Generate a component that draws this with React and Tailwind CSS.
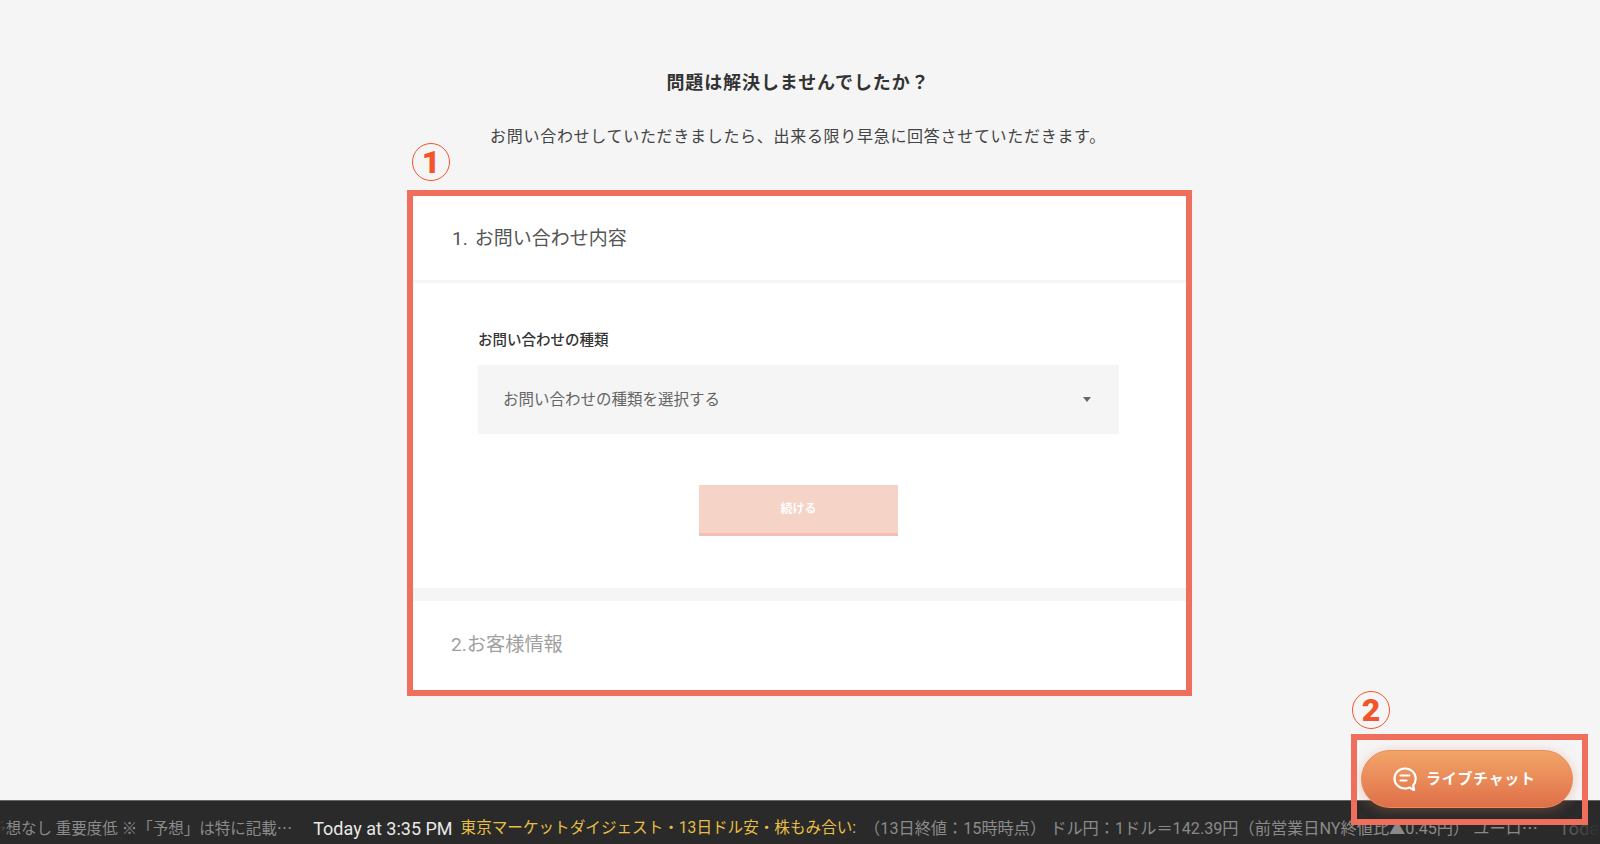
// Contact form page with annotation boxes and ticker
import React from 'react'

const font = { fontFamily: 'Roboto, "Noto Sans CJK JP", sans-serif' }

function ChatIcon() {
  return (
    <svg width="24" height="24" viewBox="0 0 24 24" fill="none" stroke="white" strokeWidth="2.2" strokeLinecap="round" strokeLinejoin="round">
      <path d="M12 1.5C6 1.5 1.5 6 1.5 11.5S6 21.5 12 21.5c1.6 0 3.2-.3 4.5-1l4.5 2.5-.8-4.8c1.7-1.8 2.5-4 2.5-6.7C22.700 6 18 1.500 12 1.500Z" />
      <path d="M7.500 8.500h9M7.500 13.500h6" />
    </svg>
  )
}

function Marker({ n, className }) {
  return (
    <div className={`absolute w-[38px] h-[38px] rounded-full border-[1.500px] border-[#f2552c] flex items-center justify-center text-[32px] leading-none font-black text-[#f2552c] ${className}`}>
      {n}
    </div>
  )
}

export default function App() {
  return (
    <div className="relative h-screen flex flex-col overflow-hidden bg-[#f5f5f5]" style={font}>
      <main className="flex-1 min-h-0 flex flex-col items-center pr-[4px]">
        <h1 className="mt-[70px] h-[26px] leading-[26px] text-[18px] font-bold tracking-[0.900px] text-[#333] text-center">問題は解決しませんでしたか？</h1>
        <p className="mt-[28px] h-[26px] leading-[26px] text-[16px] tracking-[0.700px] text-[#444] text-center">お問い合わせしていただきましたら、出来る限り早急に回答させていただきます。</p>

        <section className="mt-[40px] self-start ml-[407px] w-[785px] h-[506px] border-[6px] border-[#ef6f5c] bg-white flex flex-col">
          <div className="h-[87px] shrink-0 flex items-center pl-[39px] pt-[2px] border-b-[3px] border-[#f5f5f5] text-[19px] text-[#555]">
            <span className="mr-[7px]">1.</span> お問い合わせ内容
          </div>
          <div className="flex-1 pl-[65px] pr-[67px] pt-[45px]">
            <div className="text-[14.500px] leading-[26px] h-[26px] font-medium text-[#333]">お問い合わせの種類</div>
            <div className="mt-[11px] h-[69px] bg-[#f5f5f5] flex items-center justify-between pl-[25px] pr-[28px]">
              <span className="text-[15.500px] text-[#666] pt-[2px]">お問い合わせの種類を選択する</span>
              <span className="w-0 h-0 border-x-[4px] border-x-transparent border-t-[5px] border-t-[#666]" />
            </div>
            <div className="mt-[51px] flex justify-center">
              <button className="w-[199px] h-[51px] bg-[#f5d3c7] border-b-[3px] border-[#f3c0b8] text-white text-[12px] font-bold flex items-center justify-center">
                続ける
              </button>
            </div>
          </div>
          <div className="h-[13px] shrink-0 bg-[#f5f5f5]" />
          <div className="h-[89px] shrink-0 flex items-center pl-[38px] pb-[1px] text-[19.200px] text-[#a0a0a0]">
            2.お客様情報
          </div>
        </section>
      </main>

      <footer className="relative h-[44px] shrink-0 bg-[#2a2a2a] border-t border-[#666] overflow-hidden flex items-center pt-[12px] whitespace-nowrap text-[15.500px]">
        <div className="flex items-center ml-[-10px]">
          <span className="text-[#8a8a8a]">予想なし 重要度低 ※「予想」は特に記載<span className="font-['Noto_Sans_CJK_JP']">…</span></span>
          <span className="ml-[21px] text-[18px] text-[#e8e8e8]">Today at 3:35 PM</span>
          <span className="ml-[8px] text-[15.600px] text-[#e8bf45]">東京マーケットダイジェスト・13日ドル安・株もみ合い:</span>
          <span className="ml-[8px] text-[16.200px] text-[#8a8a8a]">（13日終値：15時時点） ドル円：1ドル＝142.39円（前営業日NY終値比▲0.45円） ユーロ<span className="font-['Noto_Sans_CJK_JP']">…</span></span>
          <span className="ml-[21px] text-[18px] text-[#8a8a8a]">Today at</span>
        </div>
        <div className="absolute inset-y-0 left-0 w-[10px] bg-gradient-to-r from-[#2a2a2a] to-transparent" />
        <div className="absolute inset-y-0 right-0 w-[60px] bg-gradient-to-l from-[#2a2a2a] to-transparent" />
      </footer>

      {/* annotations over the page */}
      <Marker n="1" className="left-[412px] top-[143px]" />
      <Marker n="2" className="left-[1352px] top-[691px]" />
      <div className="absolute left-[1351px] top-[734px] w-[237px] h-[91px] border-[6px] border-[#ef6f5c]" />

      <button className="absolute left-[1361px] top-[750px] w-[212px] h-[58px] rounded-full bg-gradient-to-b from-[#f2a568] to-[#df6f49] border border-[#e88a5c] shadow-[0_2px_12px_rgba(224,112,74,0.35)] flex items-center pl-[31px] gap-[9px] text-white text-[15px] font-bold tracking-[0.700px]">
        <ChatIcon />
        ライブチャット
      </button>
    </div>
  )
}
